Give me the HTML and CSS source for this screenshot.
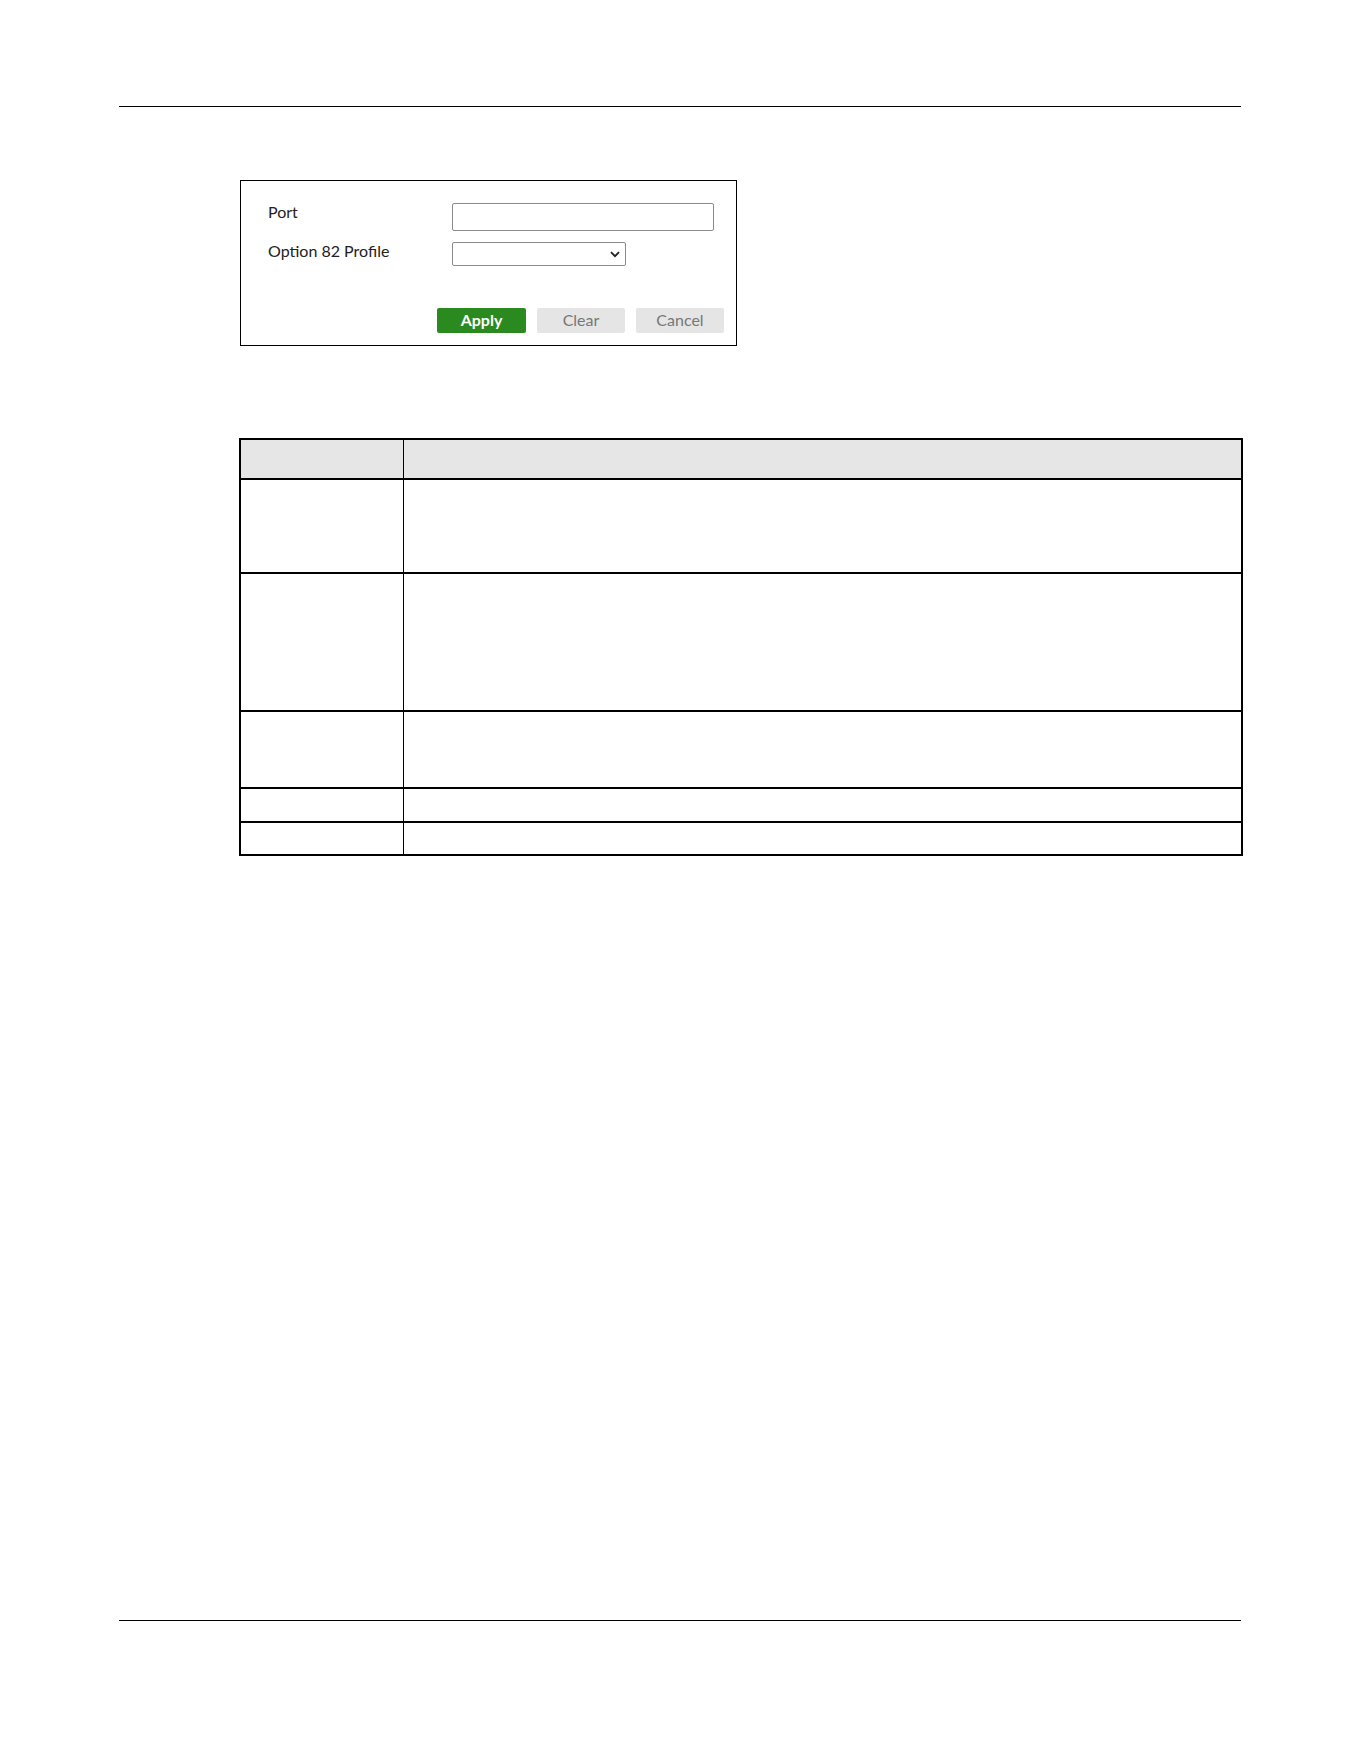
FILE: index.html
```html
<!DOCTYPE html>
<html>
<head>
<meta charset="utf-8">
<title>Option 82 Port Profile</title>
<link rel="stylesheet" href="styles.css">
</head>
<body>
<div class="page">

<hr class="rule rule-top">

<div class="panel">
  <div class="form-grid">
    <label class="field-label" for="port">Port</label>
    <input class="text-input" id="port" type="text">

    <label class="field-label" for="profile">Option 82 Profile</label>
    <div class="select-box" id="profile">
      <svg class="chevron" width="10" height="7" viewBox="0 0 10 7">
        <path d="M1 1.2 L5 5.2 L9 1.2" fill="none" stroke="#222" stroke-width="1.8"/>
      </svg>
    </div>
  </div>

  <div class="button-row">
    <button class="btn btn-apply">Apply</button>
    <button class="btn btn-muted">Clear</button>
    <button class="btn btn-muted">Cancel</button>
  </div>
</div>

<table class="fields">
  <tr class="head"><th class="col-label"></th><th></th></tr>
  <tr class="r1"><td></td><td></td></tr>
  <tr class="r2"><td></td><td></td></tr>
  <tr class="r3"><td></td><td></td></tr>
  <tr class="r4"><td></td><td></td></tr>
  <tr class="r5"><td></td><td></td></tr>
</table>

<hr class="rule rule-bottom">

</div>
</body>
</html>
```

FILE: styles.css
```css
body {
   margin: 0;
   background-color: white;
   font-family: "Lato", "DejaVu Sans", sans-serif;
   color: #222;
}

.page {
   width: 1361px;
   height: 1761px;
   overflow: hidden;
}

/* page rules */
.rule {
   margin: 0 0 0 119px;
   width: 1122px;
   height: 0;
   border: none;
   border-top: 1.5px solid #000;
}

.rule-top {
   margin-top: 106px;
}

.rule-bottom {
   margin-top: 764px;
}

/* settings panel */
.panel {
   margin: 73px 0 0 240px;
   width: 495px;
   height: 164px;
   border: 1px solid #000;
   display: flex;
   flex-direction: column;
   box-sizing: content-box;
}

.form-grid {
   display: grid;
   grid-template-columns: 184px auto;
   row-gap: 11px;
   padding: 22px 0 0 27px;
   align-items: start;
}

.field-label {
   font-size: 16px;
   line-height: 19px;
   margin-top: -1px;
   color: #222;
}

.text-input {
   width: 262px;
   height: 28px;
   box-sizing: border-box;
   border: 1px solid #8a8a8a;
   border-radius: 2px;
   margin: 0;
}

.select-box {
   width: 174px;
   height: 24px;
   box-sizing: border-box;
   border: 1px solid #8a8a8a;
   border-radius: 2px;
   display: flex;
   align-items: center;
   justify-content: flex-end;
   padding-right: 5px;
}

.button-row {
   margin-top: auto;
   display: flex;
   justify-content: flex-end;
   gap: 11px;
   padding: 0 12px 12px 0;
}

.btn {
   height: 25px;
   border: none;
   border-radius: 2px;
   font-family: "Lato", "DejaVu Sans", sans-serif;
   font-size: 16px;
   line-height: 23px;
   padding: 0 0 2px 0;
}

.btn-apply {
   width: 89px;
   background-color: #2a8a1f;
   color: white;
   font-weight: bold;
}

.btn-muted {
   width: 88px;
   background-color: #e5e5e5;
   color: #777;
}

/* field description table */
.fields {
   margin: 92px 0 0 239px;
   width: 1004px;
   border-collapse: collapse;
   border: 2px solid #000;
}

.fields th, .fields td {
   padding: 0;
   border-top: 2px solid #000;
   border-bottom: 2px solid #000;
   border-left: 1px solid #000;
}

.fields th {
   background-color: #e6e6e6;
}

.fields .col-label {
   width: 162px;
}

.head { height: 40px; }
.r1 { height: 94px; }
.r2 { height: 138px; }
.r3 { height: 77px; }
.r4 { height: 34px; }
.r5 { height: 33px; }
```
